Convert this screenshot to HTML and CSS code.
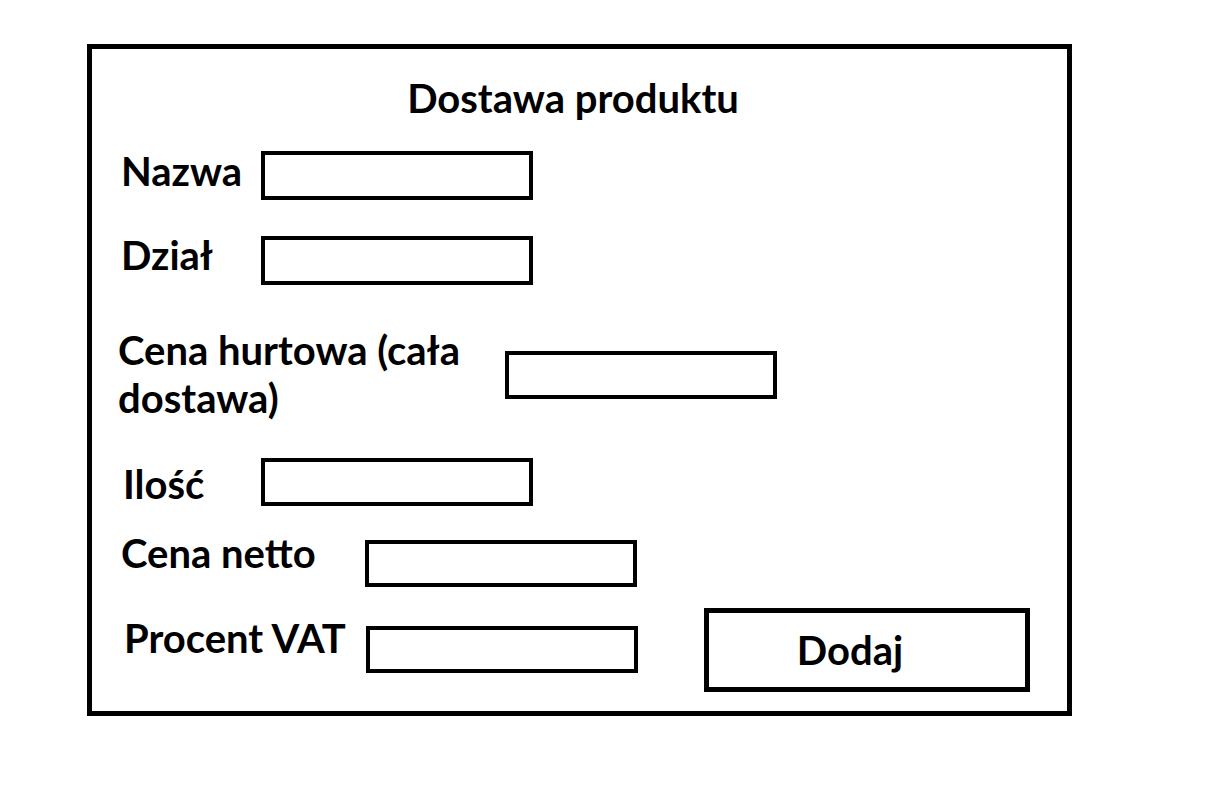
FILE: index.html
```html
<!DOCTYPE html>
<html lang="pl">
<head>
    <meta charset="UTF-8">
    <meta name="viewport" content="width=device-width, initial-scale=1.0">
    <title>Dostawa produktu</title>
    <link rel="stylesheet" href="styles.css">
</head>
<body>

    <div class="frame">
        <h1 class="title">Dostawa produktu</h1>

        <!-- Pola formularza dostawy -->
        <div class="row row-nazwa">
            <label class="label label-short">Nazwa</label>
            <input type="text" class="field">
        </div>
        <div class="row row-dzial">
            <label class="label label-short">Dział</label>
            <input type="text" class="field">
        </div>
        <div class="row row-hurt">
            <label class="label label-wide">Cena hurtowa (cała<br>dostawa)</label>
            <input type="text" class="field">
        </div>
        <div class="row row-ilosc">
            <label class="label label-short">Ilość</label>
            <input type="text" class="field">
        </div>
        <div class="row row-netto">
            <label class="label label-mid">Cena netto</label>
            <input type="text" class="field">
        </div>
        <div class="row row-vat">
            <label class="label label-mid">Procent VAT</label>
            <input type="text" class="field">
            <button type="button" class="add-btn">Dodaj</button>
        </div>
    </div>

</body>
</html>
```

FILE: styles.css
```css
/* Ogólne */
body {
    margin: 0;
    background-color: #ffffff;
    color: #000000;
    font-family: Lato, "Open Sans", sans-serif;
    font-weight: 700;
}

.frame {
    box-sizing: border-box;
    width: 985px;
    height: 672px;
    margin: 44px 0 0 87px;
    border: 5px solid #000;
    padding-left: 29px;
}

.title {
    margin: 25px 13px 0 -29px;
    font-size: 40px;
    line-height: 48px;
    font-weight: 700;
    text-align: center;
}

/* Wiersze formularza */
.row {
    display: flex;
    align-items: flex-start;
}

.label {
    font-size: 40px;
    line-height: 48px;
    flex-shrink: 0;
}

.label-short { width: 140px; }
.label-mid { width: 244px; }
.label-wide { width: 384px; }

.field {
    box-sizing: border-box;
    width: 272px;
    height: 49px;
    padding: 0;
    border: 4px solid #000;
    background: #fff;
    outline: none;
}

.row-nazwa { margin-top: 25px; }
.row-nazwa .field { margin-top: 4px; }

.row-dzial { margin-top: 31px; }
.row-dzial .field { margin-top: 5px; }

.row-hurt { margin-top: 41px; }
.row-hurt .label { margin-left: -3px; width: 387px; }
.row-hurt .field { margin-top: 25px; height: 48px; }

.row-ilosc { margin-top: 36px; }
.row-ilosc .label { margin-top: 2px; padding-left: 2px; width: 138px; }
.row-ilosc .field { height: 48px; }

.row-netto { margin-top: 21px; }
.row-netto .field { margin-top: 11px; height: 47px; }

.row-vat { margin-top: 21px; }
.row-vat .label { margin-top: 6px; padding-left: 3px; width: 242px; }
.row-vat .field { margin-top: 18px; height: 47px; }

.add-btn {
    box-sizing: border-box;
    width: 326px;
    height: 84px;
    margin: 0 37px 0 auto;
    padding: 0 34px 0 0;
    border: 5px solid #000;
    background: #fff;
    color: #000;
    font-family: Lato, "Open Sans", sans-serif;
    font-size: 40px;
    font-weight: 700;
    cursor: pointer;
}
```
